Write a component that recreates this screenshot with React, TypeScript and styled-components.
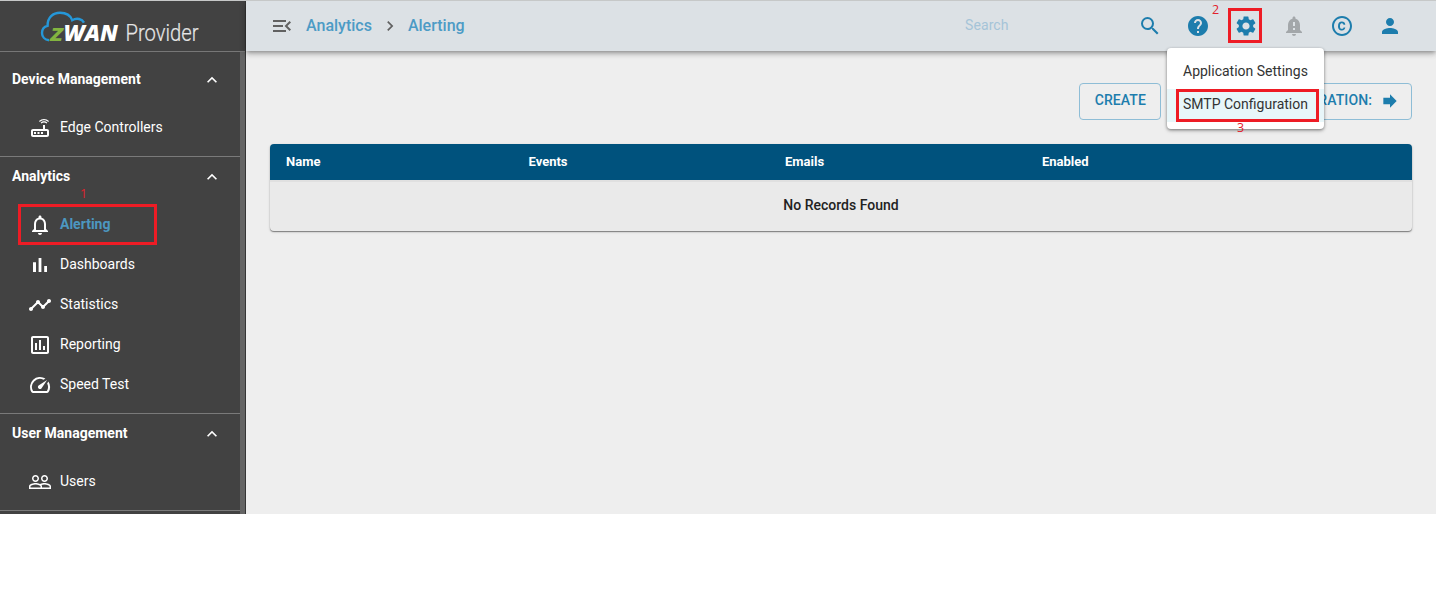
import React from "react";
import styled, { createGlobalStyle } from "styled-components";
import {
  MdMenuOpen, MdSearch, MdHelp, MdSettings, MdNotificationImportant, MdCopyright, MdPerson,
  MdForward, MdOutlineRouter, MdNotificationsNone, MdTimeline, MdOutlineAssessment, MdSpeed,
  MdPeopleOutline, MdExpandLess, MdChevronRight,
} from "react-icons/md";

const GlobalStyle = createGlobalStyle`
  *, *::before, *::after { box-sizing: border-box; }
  body { margin: 0; background: #fff; font-family: Roboto, "Liberation Sans", sans-serif; }
`;

const Screen = styled.div`
  position: relative;
  display: flex;
  width: 1436px;
  height: 514px;
  overflow: hidden;
  background: #eee;
  border-top: 1px solid #c6c8c8;
`;

const Sidebar = styled.aside`
  flex: none;
  width: 246px;
  background: #424242;
  border-right: 1px solid #353535;
  color: #fff;
`;

const Brand = styled.div`
  height: 51px;
  padding: 10px 0 0 40px;
  border-bottom: 1px solid #777;
`;

const SidebarBody = styled.div`
  height: 462px;
  overflow: hidden;
  border-right: 5px solid #646464;
`;

const Section = styled.section<{ $height: number }>`
  height: ${(p) => p.$height}px;
  border-bottom: 1px solid #7a7a7a;
`;

const SectionHead = styled.div<{ $first: boolean }>`
  display: flex;
  align-items: center;
  justify-content: space-between;
  height: ${(p) => (p.$first ? 55 : 39)}px;
  margin-bottom: ${(p) => (p.$first ? 0 : 8)}px;
  padding: 0 18px 0 12px;
  font-size: 14px;
  font-weight: 700;
  line-height: 17px;
  svg { width: 20px; height: 20px; margin-top: 1px; }
`;

const NavItem = styled.a<{ $active?: boolean }>`
  display: flex;
  align-items: center;
  height: 40px;
  padding-left: 28px;
  gap: 8px;
  font-size: 14px;
  line-height: 20px;
  font-weight: ${(p) => (p.$active ? 700 : 400)};
  svg { width: 24px; height: 24px; color: #fff; margin-top: 2px; }
  span { color: ${(p) => (p.$active ? "#4c97c0" : "#fff")}; }
`;

const Main = styled.main`
  flex: 1;
  min-width: 0;
`;

const TopBar = styled.header`
  display: flex;
  align-items: center;
  height: 50px;
  padding: 0 34px 0 24px;
  background: #dce1e5;
  box-shadow: 0 2px 4px -1px rgba(0, 0, 0, 0.3), 0 4px 5px rgba(0, 0, 0, 0.12), 0 1px 8px rgba(0, 0, 0, 0.1);
`;

const MenuToggle = styled.div`
  display: flex;
  width: 36px;
  color: #616161;
`;

const Crumbs = styled.nav`
  display: flex;
  align-items: center;
  padding-bottom: 2px;
  color: #4c9bc5;
  font-size: 16px;
  font-weight: 500;
  svg { color: #616161; margin: 2px 8px 0; width: 20px; height: 20px; }
`;

const SearchHint = styled.div`
  margin-left: auto;
  width: 173px;
  padding-bottom: 2px;
  font-size: 14px;
  letter-spacing: 0.1px;
  color: #a5c4d8;
`;

const Actions = styled.div`
  display: flex;
  align-items: center;
  gap: 24px;
  color: #1d7dad;
`;

const ActionIcon = styled.span<{ $muted?: boolean }>`
  display: flex;
  color: ${(p) => (p.$muted ? "#a3a7aa" : "inherit")};
`;

const Content = styled.div`
  padding: 32px 24px 0;
`;

const Toolbar = styled.div`
  display: flex;
  justify-content: flex-end;
  gap: 16px;
`;

const OutlineButton = styled.button<{ $width: number; $end?: number }>`
  display: flex;
  align-items: center;
  justify-content: flex-end;
  gap: 8px;
  width: ${(p) => p.$width}px;
  height: 37px;
  padding: 0 ${(p) => p.$end ?? 14}px 3px;
  background: transparent;
  border: 1px solid #8ebdd6;
  border-radius: 4px;
  color: #1d7dad;
  font: 500 14px Roboto, sans-serif;
  letter-spacing: 0.1px;
  white-space: nowrap;
  svg { margin-top: 2px; }
`;

const Table = styled.div`
  margin-top: 24px;
  border-radius: 4px;
  overflow: hidden;
  background: #eaeaea;
  box-shadow: 0 1px 1px rgba(0, 0, 0, 0.4), 0 1px 3px rgba(0, 0, 0, 0.16);
`;

const TableHead = styled.div`
  display: grid;
  grid-template-columns: 242.5px 256.5px 257px 1fr;
  align-items: center;
  height: 36px;
  padding: 0 16px 2px;
  background: #00527d;
  color: #fff;
  font-size: 13px;
  font-weight: 700;
`;

const EmptyRow = styled.div`
  height: 51px;
  border-top: 2px solid #e0e0e0;
  text-align: center;
  line-height: 47px;
  font-size: 14px;
  font-weight: 500;
  color: #222;
`;

const Menu = styled.div`
  position: absolute;
  left: 1167px;
  top: 47px;
  width: 157px;
  height: 81px;
  padding-top: 8px;
  border-radius: 4px;
  background: #fff;
  box-shadow: 0 1px 3px rgba(0, 0, 0, 0.4), 0 2px 4px rgba(0, 0, 0, 0.16);
`;

const MenuItem = styled.div<{ $selected?: boolean }>`
  height: 33px;
  padding-left: 16px;
  line-height: 31px;
  font-size: 14px;
  white-space: nowrap;
  color: #333;
  background: ${(p) => (p.$selected ? "#e8f6f9" : "transparent")};
`;

const Highlight = styled.div<{ $x: number; $y: number; $w: number; $h: number }>`
  position: absolute;
  left: ${(p) => p.$x}px;
  top: ${(p) => p.$y}px;
  width: ${(p) => p.$w}px;
  height: ${(p) => p.$h}px;
  border: 3px solid #ee1c25;
`;

const Step = styled.span<{ $x: number; $y: number }>`
  position: absolute;
  left: ${(p) => p.$x}px;
  top: ${(p) => p.$y}px;
  font: 12.5px/16px "Open Sans", sans-serif;
  color: #e2202c;
`;

const Logo = () => (
  <svg width="170" height="36" viewBox="0 0 170 36">
    <path d="M9 29.2C4.600 28.800 2 25.500 2 22C2 18 4.500 15.500 7.600 14.800C7.400 6.500 13 1.800 20 1.800C26.200 1.800 30.500 4.500 32.200 9.200C37 6.500 42 8 44 11.600" fill="none" stroke="#2597d8" strokeWidth="2.400" />
    <text x="10" y="29.500" fontFamily="Open Sans" fontWeight="700" fontStyle="italic" fontSize="23.500" fill="#83b440" textLength="13.500" lengthAdjust="spacingAndGlyphs">z</text>
    <text x="23.500" y="29.500" fontFamily="Open Sans" fontWeight="800" fontStyle="italic" fontSize="23" fill="#fff" textLength="54.500" lengthAdjust="spacingAndGlyphs">WAN</text>
    <text x="85.500" y="29.500" fontFamily="Roboto" fontWeight="300" fontSize="23" fill="#e6e6e6" stroke="#e6e6e6" strokeWidth="0.200" textLength="73" lengthAdjust="spacingAndGlyphs">Provider</text>
  </svg>
);

const BarsIcon = () => (
  <svg viewBox="0 0 24 24" fill="currentColor">
    <path d="M5 9.200h3V19H5zM10.600 5h2.800v14h-2.800zM16.200 13H19v6h-2.800z" />
  </svg>
);

type Item = { label: string; Icon: React.ComponentType; active?: boolean };

const sections: { title: string; height: number; items: Item[] }[] = [
  { title: "Device Management", height: 105, items: [{ label: "Edge Controllers", Icon: MdOutlineRouter }] },
  {
    title: "Analytics",
    height: 257,
    items: [
      { label: "Alerting", Icon: MdNotificationsNone, active: true },
      { label: "Dashboards", Icon: BarsIcon },
      { label: "Statistics", Icon: MdTimeline },
      { label: "Reporting", Icon: MdOutlineAssessment },
      { label: "Speed Test", Icon: MdSpeed },
    ],
  },
  { title: "User Management", height: 97, items: [{ label: "Users", Icon: MdPeopleOutline }] },
];

export default function App() {
  return (
    <>
      <GlobalStyle />
      <Screen>
        <Sidebar>
          <Brand><Logo /></Brand>
          <SidebarBody>
            {sections.map((s, i) => (
              <Section key={s.title} $height={s.height}>
                <SectionHead $first={i === 0}>
                  {s.title}
                  <MdExpandLess />
                </SectionHead>
                {s.items.map(({ label, Icon, active }) => (
                  <NavItem key={label} $active={active}>
                    <Icon />
                    <span>{label}</span>
                  </NavItem>
                ))}
              </Section>
            ))}
          </SidebarBody>
        </Sidebar>
        <Main>
          <TopBar>
            <MenuToggle><MdMenuOpen size={24} /></MenuToggle>
            <Crumbs>
              Analytics
              <MdChevronRight />
              Alerting
            </Crumbs>
            <SearchHint>Search</SearchHint>
            <Actions>
              <ActionIcon><MdSearch size={24} /></ActionIcon>
              <ActionIcon><MdHelp size={24} /></ActionIcon>
              <ActionIcon><MdSettings size={24} /></ActionIcon>
              <ActionIcon $muted><MdNotificationImportant size={24} /></ActionIcon>
              <ActionIcon><MdCopyright size={24} /></ActionIcon>
              <ActionIcon><MdPerson size={24} /></ActionIcon>
            </Actions>
          </TopBar>
          <Content>
            <Toolbar>
              <OutlineButton $width={82}>CREATE</OutlineButton>
              <OutlineButton $width={235} $end={11}>CONFIGURATION: <MdForward size={20} /></OutlineButton>
            </Toolbar>
            <Table>
              <TableHead>
                <span>Name</span>
                <span>Events</span>
                <span>Emails</span>
                <span>Enabled</span>
              </TableHead>
              <EmptyRow>No Records Found</EmptyRow>
            </Table>
          </Content>
        </Main>
        <Menu>
          <MenuItem>Application Settings</MenuItem>
          <MenuItem $selected>SMTP Configuration</MenuItem>
        </Menu>
        <Highlight $x={18} $y={203} $w={139} $h={41} />
        <Highlight $x={1228} $y={7} $w={34} $h={35} />
        <Highlight $x={1176} $y={88} $w={143} $h={33} />
        <Step $x={80} $y={185}>1</Step>
        <Step $x={1212} $y={1}>2</Step>
        <Step $x={1237} $y={119}>3</Step>
      </Screen>
    </>
  );
}
